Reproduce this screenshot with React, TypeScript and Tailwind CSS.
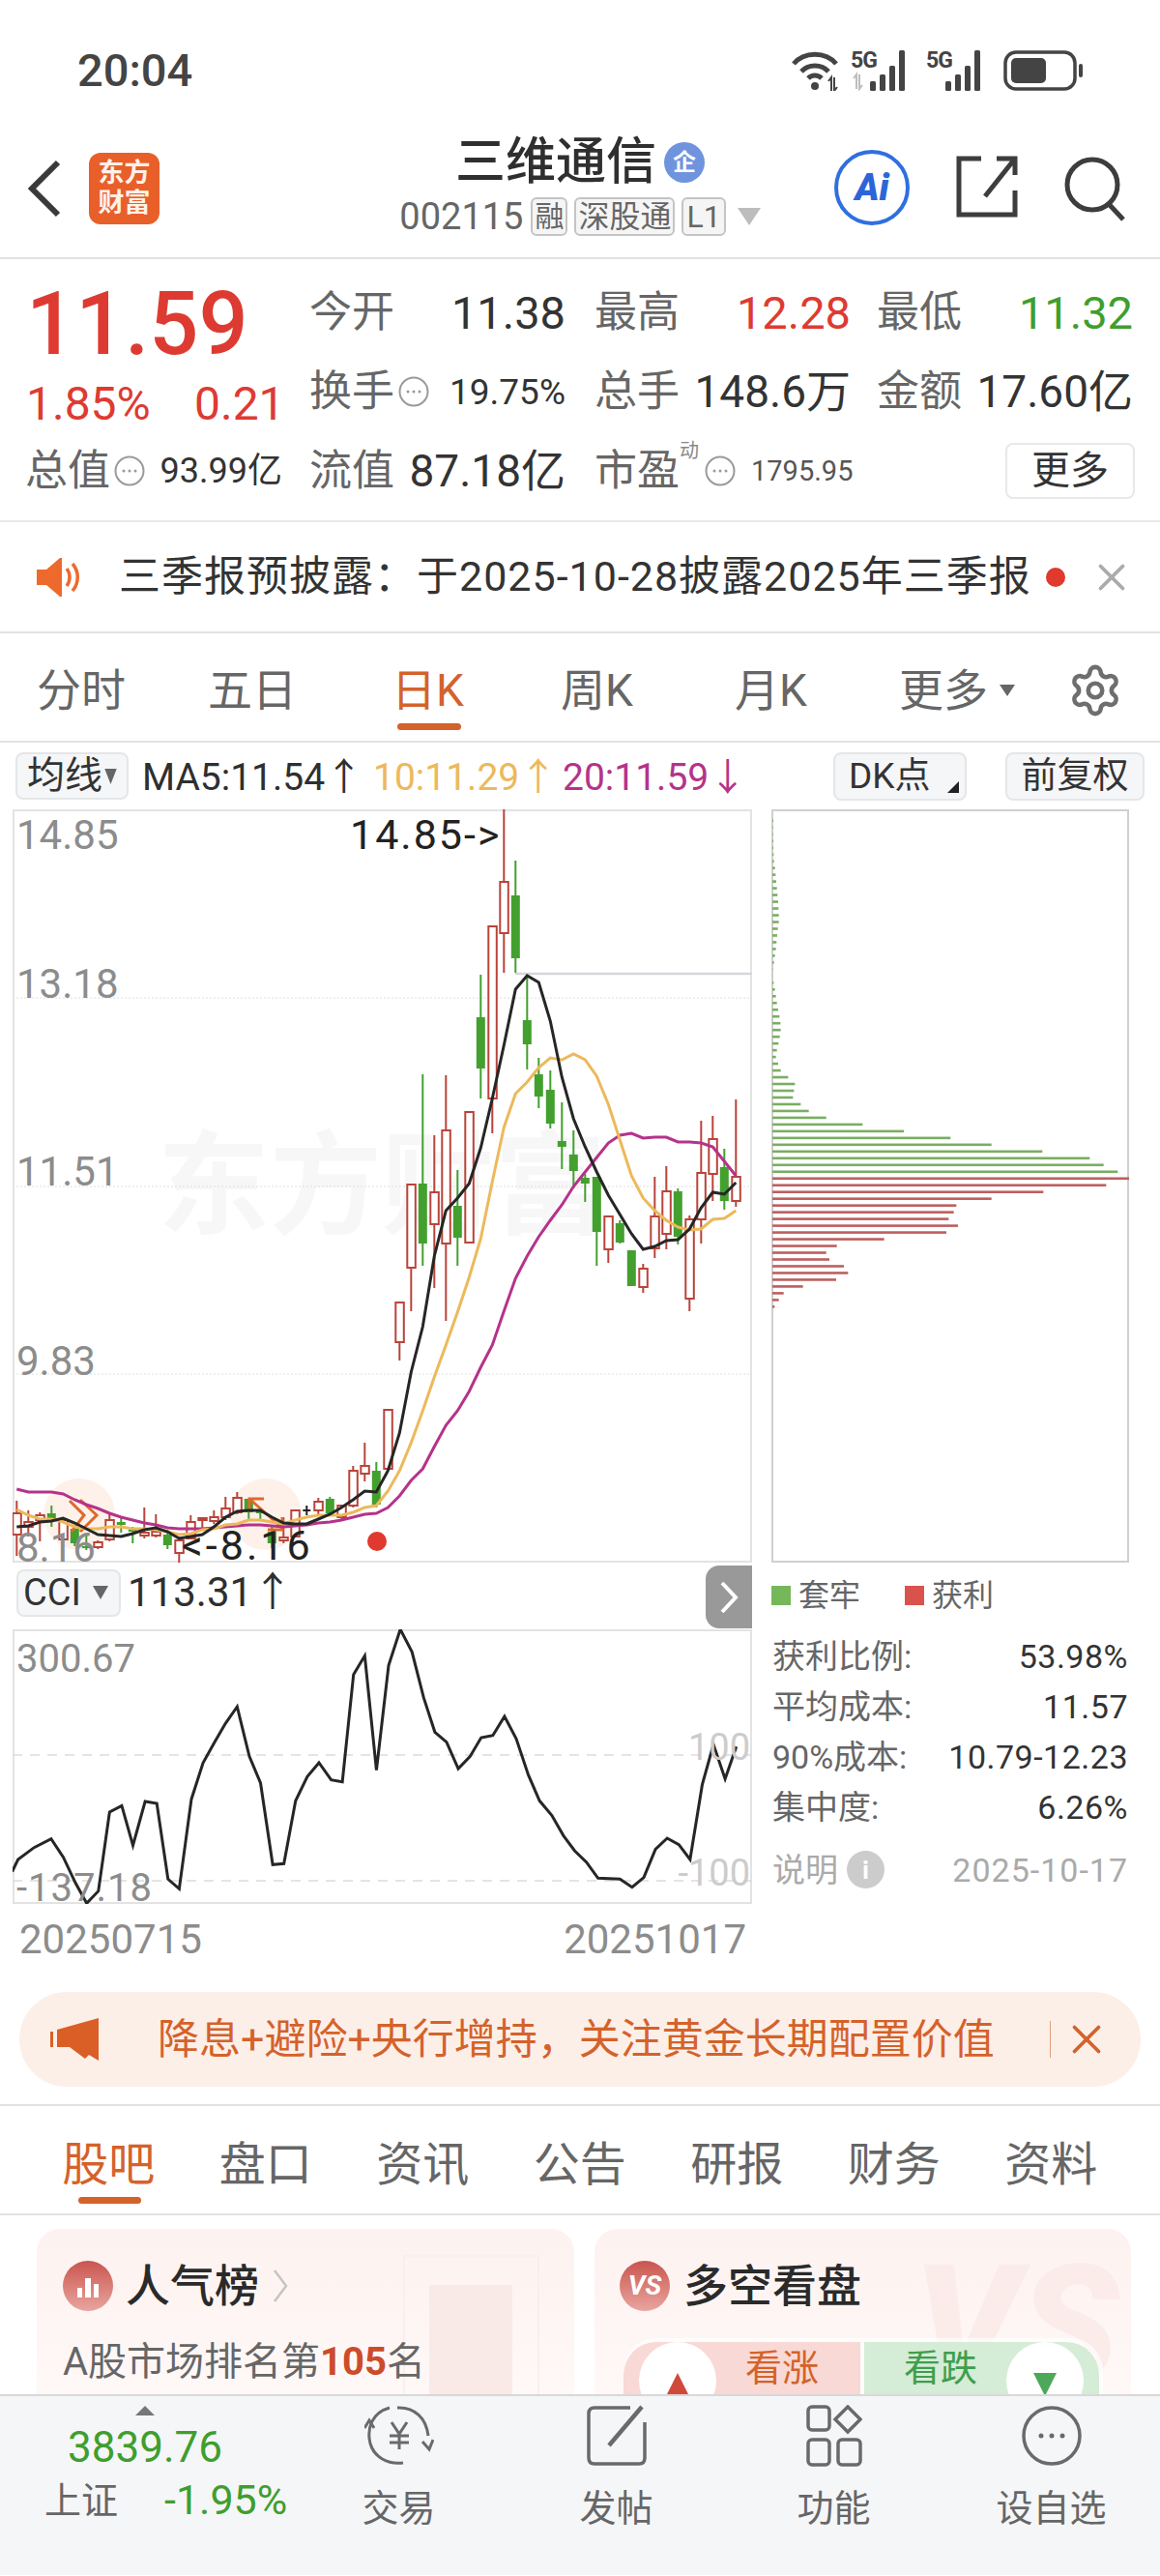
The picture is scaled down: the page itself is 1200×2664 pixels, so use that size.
import { Settings, X } from "lucide-react";

// [bodyTop, bodyBottom, high, low, "r" | "g"]
type Candle = [number, number, number, number, string];

const candles: Candle[] = [
  [1566, 1588, 1553, 1610, "r"],
  [1575, 1580, 1563, 1590, "r"],
  [1568, 1573, 1565, 1595, "r"],
  [1566, 1572, 1558, 1580, "g"],
  [1573, 1593, 1570, 1595, "r"],
  [1582, 1597, 1580, 1600, "g"],
  [1600, 1602, 1587, 1604, "g"],
  [1596, 1601, 1594, 1603, "r"],
  [1573, 1593, 1565, 1595, "r"],
  [1575, 1578, 1570, 1586, "g"],
  [1583, 1585, 1580, 1597, "g"],
  [1586, 1589, 1560, 1592, "r"],
  [1585, 1589, 1567, 1591, "r"],
  [1588, 1599, 1583, 1603, "g"],
  [1594, 1607, 1590, 1617, "r"],
  [1575, 1592, 1568, 1593, "r"],
  [1571, 1573, 1570, 1583, "r"],
  [1570, 1574, 1563, 1577, "r"],
  [1561, 1570, 1549, 1573, "r"],
  [1550, 1565, 1544, 1567, "r"],
  [1551, 1565, 1551, 1573, "g"],
  [1563, 1566, 1560, 1572, "g"],
  [1585, 1597, 1579, 1602, "g"],
  [1591, 1594, 1570, 1597, "r"],
  [1563, 1590, 1563, 1590, "r"],
  [1563, 1564, 1558, 1568, "k"],
  [1554, 1563, 1550, 1567, "r"],
  [1551, 1566, 1549, 1568, "g"],
  [1558, 1570, 1557, 1572, "r"],
  [1522, 1558, 1517, 1560, "r"],
  [1517, 1525, 1493, 1533, "r"],
  [1522, 1557, 1513, 1560, "g"],
  [1459, 1520, 1459, 1520, "r"],
  [1348, 1389, 1348, 1408, "r"],
  [1226, 1312, 1226, 1357, "r"],
  [1225, 1287, 1112, 1310, "g"],
  [1234, 1267, 1175, 1333, "r"],
  [1170, 1287, 1113, 1367, "r"],
  [1248, 1281, 1211, 1310, "g"],
  [1151, 1286, 1151, 1286, "r"],
  [1053, 1106, 1009, 1137, "g"],
  [959, 1137, 959, 1173, "r"],
  [913, 966, 838, 1007, "r"],
  [927, 992, 891, 1007, "g"],
  [1056, 1081, 1010, 1107, "g"],
  [1112, 1135, 1095, 1147, "g"],
  [1128, 1163, 1108, 1168, "g"],
  [1181, 1187, 1141, 1210, "g"],
  [1195, 1212, 1170, 1230, "g"],
  [1219, 1225, 1215, 1244, "g"],
  [1218, 1275, 1218, 1310, "g"],
  [1259, 1293, 1259, 1307, "r"],
  [1266, 1286, 1263, 1287, "g"],
  [1294, 1331, 1294, 1331, "g"],
  [1313, 1332, 1308, 1338, "r"],
  [1259, 1292, 1218, 1302, "r"],
  [1233, 1277, 1207, 1293, "r"],
  [1233, 1280, 1230, 1288, "g"],
  [1262, 1344, 1258, 1357, "r"],
  [1214, 1262, 1160, 1287, "r"],
  [1179, 1215, 1155, 1243, "r"],
  [1208, 1243, 1189, 1252, "g"],
  [1218, 1243, 1138, 1249, "r"],
];

const ma5 = [
  1580, 1579, 1575, 1574, 1571, 1576, 1582, 1588, 1589, 1590, 1587, 1583, 1581, 1585, 1592, 1590, 1588, 1580, 1570, 1564,
  1563, 1563, 1570, 1576, 1577, 1577, 1572, 1567, 1560, 1552, 1543, 1544, 1522, 1483, 1420, 1373, 1300, 1253, 1240, 1225,
  1188, 1137, 1082, 1024, 1010, 1017, 1057, 1115, 1158, 1187, 1213, 1237, 1257, 1277, 1293, 1290, 1284, 1283, 1272, 1250,
  1234, 1236, 1224,
];

const ma10 = [
  1562, 1568, 1572, 1572, 1575, 1580, 1582, 1582, 1580, 1580, 1582, 1582, 1583, 1585, 1588, 1587, 1583, 1582, 1578, 1577,
  1573, 1573, 1575, 1577, 1573, 1570, 1568, 1568, 1568, 1565, 1560, 1558, 1543, 1522, 1493, 1460, 1425, 1392, 1358, 1322,
  1282, 1223, 1167, 1132, 1120, 1105, 1095, 1097, 1091, 1097, 1114, 1143, 1180, 1217, 1240, 1253, 1263, 1270, 1273, 1272,
  1262, 1261, 1253,
];

const ma20 = [
  1541, 1544, 1544, 1544, 1546, 1552, 1557, 1561, 1566, 1570, 1573, 1576, 1578, 1581, 1582, 1582, 1582, 1581, 1580, 1579,
  1578, 1578, 1579, 1580, 1579, 1578, 1576, 1575, 1573, 1570, 1567, 1566, 1560, 1548, 1532, 1520, 1497, 1475, 1460, 1440,
  1415, 1392, 1357, 1323, 1300, 1280, 1263, 1247, 1228, 1213, 1198, 1183, 1175, 1173, 1178, 1177, 1177, 1182, 1182, 1183,
  1187, 1202, 1217,
];

const cci = [
  [25, 950], [37, 912], [70, 875], [105, 848], [130, 905], [155, 985], [178, 1048], [202, 1010], [225, 765], [250, 745],
  [273, 868], [298, 732], [322, 738], [345, 973], [368, 1003], [393, 725], [417, 612], [440, 550], [463, 490], [487, 438],
  [512, 592], [535, 675], [560, 928], [583, 925], [607, 730], [631, 655], [655, 612], [680, 665], [703, 671], [726, 338],
  [749, 280], [773, 635], [798, 310], [822, 198], [846, 268], [870, 410], [893, 517], [917, 548], [941, 630], [965, 593],
  [988, 534], [1012, 527], [1036, 468], [1060, 537], [1085, 650], [1108, 730], [1133, 775], [1157, 838], [1180, 885],
  [1204, 920], [1228, 970], [1250, 971], [1273, 973], [1298, 998], [1322, 968], [1346, 880], [1370, 846], [1394, 866],
  [1417, 912], [1442, 680], [1465, 555], [1489, 662], [1512, 562],
];

const chipGreen = [
  3, 2, 2, 3, 3, 4, 5, 8, 10, 12, 14, 16, 18, 19, 20, 20, 17, 15, 13, 11, 8, 5, 1, 0, 4, 8, 11, 14, 18, 22, 25, 26, 23, 19,
  14, 11, 18, 26, 49, 70, 67, 64, 88, 113, 167, 280, 408, 553, 680, 838, 985, 1028, 1072,
];
const chipRed = [1107, 1036, 841, 680, 571, 563, 547, 576, 540, 347, 200, 167, 177, 222, 235, 198, 95, 35, 20, 7];

const candleX = (i: number) => 17.3 + 12 * i;
const linePoints = (ys: number[]) => ys.map((y, i) => `${candleX(i)},${y}`).join(" ");

function KChart() {
  return (
    <svg viewBox="13 838 765 779" className="absolute left-[-2px] top-[-2px] h-[779px] w-[765px]">
      <line x1="13" x2="778" y1="1033" y2="1033" stroke="#dedede" strokeDasharray="2 2" />
      <line x1="13" x2="778" y1="1228" y2="1228" stroke="#dedede" strokeDasharray="2 2" />
      <line x1="13" x2="778" y1="1422" y2="1422" stroke="#dedede" strokeDasharray="2 2" />
      <line x1="533" x2="778" y1="1008" y2="1008" stroke="#d5d5dc" strokeWidth="2.5" />
      <circle cx="82" cy="1567" r="37" fill="#fdf1ea" />
      <circle cx="275" cy="1567" r="37" fill="#fdf1ea" />
      {candles.map(([top, bottom, high, low, c], i) => {
        const x = candleX(i);
        const color = c === "r" ? "#b9443b" : c === "g" ? "#43a02f" : "#222222";
        return (
          <g key={i}>
            <line x1={x} x2={x} y1={high} y2={low} stroke={color} strokeWidth="2" />
            {c === "g" ? (
              <rect x={x - 4.5} y={top} width="9" height={bottom - top} fill={color} />
            ) : c === "r" ? (
              <rect x={x - 4} y={top} width="8.5" height={bottom - top} fill="#ffffff" stroke={color} strokeWidth="2" />
            ) : (
              <line x1={x - 4} x2={x + 4} y1={top} y2={top} stroke={color} strokeWidth="2" />
            )}
          </g>
        );
      })}
      <g fill="none" stroke="#dd6a2c" strokeWidth="3">
        <path d="M72 1553 L87 1568 L74 1585 M83 1552 L100 1568 L83 1585" />
        <path d="M273 1551 L258 1551 L258 1565 M258 1551 L293 1582 M292 1570 L292 1583 L277 1583" />
      </g>
      <polyline points={linePoints(ma20)} fill="none" stroke="#b5338a" strokeWidth="3" />
      <polyline points={linePoints(ma10)} fill="none" stroke="#ecb95b" strokeWidth="3" />
      <polyline points={linePoints(ma5)} fill="none" stroke="#262626" strokeWidth="3" />
      <circle cx="390" cy="1595" r="10" fill="#e0392d" />
    </svg>
  );
}

function ChipChart() {
  return (
    <svg viewBox="798 838 370 779" className="absolute left-[-2px] top-[-2px] h-[779px] w-[370px]">
      {chipGreen.map((w, i) => (
        <rect key={i} x="799" y={849.8 + 6.98 * i - 1.3} width={w / 3} height="2.6" fill="#7aae62" />
      ))}
      {chipRed.map((w, i) => (
        <rect key={i} x="799" y={849.8 + 6.98 * (i + 53) - 1.3} width={w / 3} height="2.6" fill="#bd5f5f" />
      ))}
    </svg>
  );
}

function CciChart() {
  const pts = cci.map(([x, y]) => `${x / 1.985},${1620 + y / 3}`).join(" ");
  return (
    <svg viewBox="13 1686 765 284" className="absolute left-[-2px] top-[-2px] h-[284px] w-[765px]">
      <line x1="13" x2="778" y1="1816" y2="1816" stroke="#dcdcdc" strokeWidth="1.5" strokeDasharray="10 8" />
      <line x1="13" x2="778" y1="1946" y2="1946" stroke="#dcdcdc" strokeWidth="1.5" strokeDasharray="10 8" />
      <polyline points={pts} fill="none" stroke="#262626" strokeWidth="3" />
    </svg>
  );
}

function Dots({ className }: { className: string }) {
  return (
    <svg viewBox="0 0 32 32" className={className}>
      <circle cx="16" cy="16" r="14.5" fill="none" stroke="#9a9a9a" strokeWidth="2" />
      <circle cx="10" cy="16" r="1.5" fill="#9a9a9a" />
      <circle cx="16" cy="16" r="1.5" fill="#9a9a9a" />
      <circle cx="22" cy="16" r="1.5" fill="#9a9a9a" />
    </svg>
  );
}

function Signal({ arrows }: { arrows?: boolean }) {
  return (
    <div className="relative h-[42px] w-[66px]">
      <span className="absolute left-0 top-[-2px] text-[23px] font-bold leading-[26px] tracking-[-1px] text-[#444444]">5G</span>
      <svg viewBox="0 0 66 42" className="absolute inset-0 h-full w-full">
        {arrows && <path d="M3 29 L6 25 L6 40 M12 36 L9 40 L9 25" fill="none" stroke="#bdbdbd" strokeWidth="2" />}
        <rect x="20" y="32" width="6" height="10" rx="1.5" fill="#444444" />
        <rect x="30" y="25" width="6" height="17" rx="1.5" fill="#444444" />
        <rect x="40" y="16" width="6" height="26" rx="1.5" fill="#444444" />
        <rect x="50" y="0" width="6" height="42" rx="1.5" fill="#444444" />
      </svg>
    </div>
  );
}

function StatusBar() {
  return (
    <div className="flex h-[130px] items-start justify-between pl-[80px] pr-[78px] pt-[52px]">
      <span className="text-[47px] font-medium leading-[42px] text-[#444444]">20:04</span>
      <div className="flex items-start">
        <svg viewBox="0 0 56 42" className="mr-[6px] h-[42px] w-[56px]">
          <g fill="none" stroke="#444444" strokeWidth="5">
            <path d="M3 14 C14 1 36 1 47 14" />
            <path d="M11 22 C18 14 32 14 39 22" />
            <path d="M18 29 C22 25 28 25 32 29" />
          </g>
          <circle cx="25" cy="37" r="4" fill="#444444" />
          <path d="M39 32 L42 28 L42 42 M48 38 L45 42 L45 28" fill="none" stroke="#444444" strokeWidth="2" />
        </svg>
        <Signal arrows />
        <div className="ml-[12px]">
          <Signal />
        </div>
        <svg viewBox="0 0 84 42" className="ml-[14px] h-[42px] w-[84px]">
          <rect x="2" y="2" width="72" height="38" rx="11" fill="none" stroke="#444444" strokeWidth="3.5" />
          <rect x="8" y="8" width="36" height="26" rx="5" fill="#444444" />
          <rect x="78" y="14" width="4" height="14" rx="2" fill="#444444" />
        </svg>
      </div>
    </div>
  );
}

function Header() {
  return (
    <div className="flex h-[138px] border-b-2 border-[#e2e2e2]">
      <div className="flex w-[350px] items-start pl-[28px] pt-[28px]">
        <svg viewBox="0 0 36 60" className="mt-[7px] h-[60px] w-[36px]">
          <path d="M32 3 L5 30 L32 57" fill="none" stroke="#3a3a3a" strokeWidth="6" />
        </svg>
        <div className="ml-[28px] flex h-[74px] w-[73px] flex-col items-center justify-center rounded-[12px] bg-[#e85f2a] text-[27px] font-bold leading-[31px] text-[#fff2e8]">
          <span>东方</span>
          <span>财富</span>
        </div>
      </div>
      <div className="flex w-[500px] flex-col items-center">
        <div className="mt-[12px] flex items-center">
          <span className="text-[52px] font-medium leading-[52px] text-[#2f2f2f]">三维通信</span>
          <span className="ml-[8px] flex h-[42px] w-[42px] items-center justify-center rounded-full bg-[#6f94dd] text-[24px] font-bold leading-none text-white">企</span>
        </div>
        <div className="mt-[8px] flex items-center">
          <span className="text-[38px] leading-[44px] text-[#666666]">002115</span>
          <span className="ml-[8px] flex h-[40px] items-center rounded-[6px] border-2 border-[#c4c4c4] bg-[#f5f5f5] px-[2px] text-[30px] leading-none text-[#666666]">融</span>
          <span className="ml-[7px] flex h-[40px] items-center rounded-[6px] border-2 border-[#c4c4c4] bg-[#f5f5f5] px-[2px] text-[32px] leading-none text-[#666666]">深股通</span>
          <span className="ml-[7px] flex h-[40px] items-center rounded-[6px] border-2 border-[#c4c4c4] bg-[#f5f5f5] px-[3px] text-[32px] leading-none text-[#666666]">L1</span>
          <svg viewBox="0 0 24 18" className="ml-[12px] h-[18px] w-[24px]">
            <path d="M0 0 L24 0 L12 18 Z" fill="#bdbdbd" />
          </svg>
        </div>
      </div>
      <div className="flex flex-1 items-start pl-[13px] pt-[25px]">
        <div className="flex h-[78px] w-[78px] items-center justify-center rounded-full border-[4px] border-[#2f6fe0] text-[38px] font-black italic leading-none text-[#2b66d9]">
          Ai
        </div>
        <svg viewBox="0 0 64 64" className="ml-[48px] mt-[6px] h-[64px] w-[64px]">
          <path d="M26 3 L3 3 L3 61 L61 61 L61 36 M61 3 L30 42 M42 3 L61 3 L61 20" fill="none" stroke="#3d3d3d" strokeWidth="5" />
        </svg>
        <svg viewBox="0 0 66 68" className="ml-[47px] mt-[6px] h-[68px] w-[66px]">
          <circle cx="30" cy="30" r="26" fill="none" stroke="#3d3d3d" strokeWidth="5" />
          <path d="M47 50 L62 66" fill="none" stroke="#3d3d3d" strokeWidth="5" />
        </svg>
      </div>
    </div>
  );
}

function Cell({ label, value, dots, valueClass }: { label: string; value: string; dots?: boolean; valueClass: string }) {
  return (
    <div className="flex h-[82px] w-[265px] items-center justify-between">
      <div className="flex items-center">
        <span className="text-[44px] leading-none text-[#666666]">{label}</span>
        {dots && <Dots className="ml-[4px] h-[32px] w-[32px]" />}
      </div>
      <span className={valueClass}>{value}</span>
    </div>
  );
}

function Quote() {
  const big = "text-[46px] leading-none text-[#333333] whitespace-nowrap";
  return (
    <div className="h-[272px] border-b-2 border-[#e8e8e8] pt-[14px]">
      <div className="flex">
        <div className="w-[320px] pl-[27px]">
          <div className="flex h-[108px] items-center text-[90px] font-medium leading-none text-[#dd3b32]">11.59</div>
          <div className="flex h-[56px] items-center text-[48px] leading-none text-[#dd3b32]">
            <span className="w-[174px]">1.85%</span>
            <span>0.21</span>
          </div>
        </div>
        <div className="flex flex-col">
          <div className="flex">
            <Cell label="今开" value="11.38" valueClass="text-[47px] leading-none text-[#333333]" />
            <div className="ml-[30px]">
              <Cell label="最高" value="12.28" valueClass="text-[47px] leading-none text-[#dd3b32]" />
            </div>
            <div className="ml-[27px]">
              <Cell label="最低" value="11.32" valueClass="text-[47px] leading-none text-[#3f9e2e]" />
            </div>
          </div>
          <div className="flex">
            <Cell label="换手" dots value="19.75%" valueClass="text-[37px] leading-none text-[#333333]" />
            <div className="ml-[30px]">
              <Cell label="总手" value="148.6万" valueClass={big} />
            </div>
            <div className="ml-[27px]">
              <Cell label="金额" value="17.60亿" valueClass={big} />
            </div>
          </div>
        </div>
      </div>
      <div className="flex items-center">
        <div className="flex h-[82px] w-[292px] items-center justify-between pl-[26px]">
          <div className="flex items-center">
            <span className="text-[44px] leading-none text-[#666666]">总值</span>
            <Dots className="ml-[4px] h-[32px] w-[32px]" />
          </div>
          <span className="text-[36px] leading-none text-[#333333]">93.99亿</span>
        </div>
        <div className="ml-[28px]">
          <Cell label="流值" value="87.18亿" valueClass={big} />
        </div>
        <div className="relative ml-[30px] flex h-[82px] w-[265px] items-center">
          <span className="shrink-0 whitespace-nowrap text-[44px] leading-none text-[#666666]">市盈</span>
          <span className="absolute left-[88px] top-[10px] text-[20px] leading-none text-[#888888]">动</span>
          <Dots className="ml-[26px] h-[32px] w-[32px] shrink-0" />
          <span className="ml-[16px] text-[29px] leading-none text-[#555555]">1795.95</span>
        </div>
        <div className="ml-[160px] flex h-[58px] w-[134px] items-center justify-center rounded-[8px] border-2 border-[#e8e8e8] bg-white text-[40px] leading-none text-[#333333]">
          更多
        </div>
      </div>
    </div>
  );
}

function Notice() {
  return (
    <div className="flex h-[115px] items-center border-b-2 border-[#e2e2e2] pl-[36px]">
      <svg viewBox="0 0 50 42" className="h-[42px] w-[50px]">
        <path d="M2 13 L12 13 L26 1 L28 1 L28 41 L26 41 L12 29 L2 29 Z" fill="#ee6a2c" />
        <path d="M33 12 C37 17 37 25 33 30 M39 7 C46 15 46 27 39 35" fill="none" stroke="#ee6a2c" strokeWidth="3.5" />
      </svg>
      <span className="ml-[37px] whitespace-nowrap text-[43px] leading-none tracking-[1px] text-[#333333]">{"三季报预披露\uFF1A于2025-10-28披露2025年三季报"}</span>
      <span className="ml-[15px] h-[20px] w-[20px] rounded-full bg-[#e0392d]" />
      <X className="ml-[25px] h-[46px] w-[46px] text-[#ababab]" strokeWidth={2} />
    </div>
  );
}

function PeriodTabs() {
  return (
    <div className="flex h-[113px] items-center border-b-2 border-[#e2e2e2] pl-[38px] pt-[6px] text-[46px] leading-none text-[#666666]">
      <span className="w-[177px]">分时</span>
      <span className="w-[190px]">五日</span>
      <span className="relative w-[175px] text-[#d4622a]">
        日K
        <span className="absolute left-[6px] top-[57px] h-[7px] w-[66px] rounded-full bg-[#d4622a]" />
      </span>
      <span className="w-[180px]">周K</span>
      <span className="w-[170px]">月K</span>
      <span>更多</span>
      <svg viewBox="0 0 16 12" className="ml-[12px] h-[12px] w-[16px]">
        <path d="M0 0 L16 0 L8 12 Z" fill="#666666" />
      </svg>
      <Settings className="ml-[54px] h-[58px] w-[58px] text-[#6e6e6e]" strokeWidth={1.9} />
    </div>
  );
}

function MaRow() {
  return (
    <div className="flex h-[69px] items-center py-[10px] pl-[16px] text-[39px] leading-none">
      <div className="flex h-[49px] w-[117px] items-center rounded-[8px] border-2 border-[#e5e6e8] bg-[#f5f6f8] pl-[10px] text-[#333333]">
        均线
        <svg viewBox="0 0 14 18" className="ml-[2px] h-[16px] w-[13px]">
          <path d="M0 0 L14 0 L7 18 Z" fill="#666666" />
        </svg>
      </div>
      <span className="ml-[14px] w-[239px] whitespace-nowrap pt-[3px] text-[#2f2f2f]">MA5:11.54↑</span>
      <span className="w-[196px] whitespace-nowrap pt-[3px] text-[#ecb95b]">10:11.29↑</span>
      <span className="w-[280px] whitespace-nowrap pt-[3px] text-[#b5338a]">20:11.59↓</span>
      <div className="relative flex h-[50px] w-[138px] items-center rounded-[8px] border-2 border-[#e5e6e8] bg-[#f5f6f8] pl-[14px] text-[37px] text-[#333333]">
        DK点
        <svg viewBox="0 0 12 12" className="absolute bottom-[6px] right-[6px] h-[12px] w-[12px]">
          <path d="M12 0 L12 12 L0 12 Z" fill="#222222" />
        </svg>
      </div>
      <div className="ml-[40px] flex h-[50px] w-[144px] items-center justify-center rounded-[8px] border-2 border-[#e5e6e8] bg-[#f5f6f8] text-[37px] text-[#333333]">
        前复权
      </div>
    </div>
  );
}

function Charts() {
  const axis = "absolute text-[42px] leading-none text-[#8c8c8c]";
  const small = "absolute text-[40px] leading-none text-[#8c8c8c]";
  return (
    <div className="flex h-[1223px] pl-[13px]">
      <div className="w-[765px]">
        <div className="relative h-[779px] border-2 border-[#e3e3e3]">
          <span className="absolute left-[148px] top-[330px] whitespace-nowrap text-[116px] font-bold leading-none text-[#f7f7f7]">东方财富</span>
          <KChart />
          <span className={`${axis} left-[2px] top-[4px]`}>14.85</span>
          <span className={`${axis} left-[2px] top-[158px]`}>13.18</span>
          <span className={`${axis} left-[2px] top-[352px]`}>11.51</span>
          <span className={`${axis} left-[2px] top-[548px]`}>9.83</span>
          <span className={`${axis} left-[2px] top-[741px]`}>8.16</span>
          <span className="absolute left-[347px] top-[3px] text-[43px] leading-none tracking-[2px] text-[#222222]">14.85-&gt;</span>
          <span className="absolute left-[173px] top-[738px] text-[43px] leading-none tracking-[3px] text-[#222222]">&lt;-8.16</span>
        </div>
        <div className="relative flex h-[69px] items-center pb-[7px] pl-[4px]">
          <div className="flex h-[49px] w-[108px] items-center rounded-[8px] border-2 border-[#e5e6e8] bg-[#f5f6f8] pl-[5px] text-[38px] leading-none text-[#333333]">
            CCI
            <svg viewBox="0 0 16 14" className="ml-[12px] h-[14px] w-[16px]">
              <path d="M0 0 L16 0 L8 14 Z" fill="#666666" />
            </svg>
          </div>
          <span className="ml-[7px] text-[42px] leading-none text-[#2f2f2f]">113.31↑</span>
          <div className="absolute right-0 top-[3px] flex h-[65px] w-[48px] items-center justify-center rounded-l-[14px] bg-[#999999]">
            <svg viewBox="0 0 20 34" className="h-[34px] w-[20px]">
              <path d="M3 2 L17 17 L3 32" fill="none" stroke="#ffffff" strokeWidth="4" />
            </svg>
          </div>
        </div>
        <div className="relative h-[284px] border-2 border-[#e3e3e3]">
          <CciChart />
          <span className={`${small} left-[2px] top-[9px]`}>300.67</span>
          <span className={`${small} left-[2px] top-[246px] tracking-[1px]`}>-137.18</span>
          <span className="absolute right-[0px] top-[101px] text-[38px] leading-none text-[#cccccc]">100</span>
          <span className="absolute right-[0px] top-[231px] text-[38px] leading-none text-[#cccccc]">-100</span>
        </div>
        <div className="flex justify-between pl-[7px] pr-[6px] pt-[16px] text-[42px] leading-[42px] text-[#8c8c8c]">
          <span>20250715</span>
          <span>20251017</span>
        </div>
      </div>
      <div className="ml-[20px] w-[370px]">
        <div className="relative h-[779px] border-2 border-[#cfcfcf]">
          <ChipChart />
        </div>
        <div className="flex h-[62px] items-center pt-[6px] text-[32px] leading-none text-[#666666]">
          <span className="h-[20px] w-[20px] bg-[#74b85a]" />
          <span className="ml-[8px] w-[110px]">套牢</span>
          <span className="h-[20px] w-[20px] bg-[#d9534c]" />
          <span className="ml-[8px]">获利</span>
        </div>
        <div className="flex flex-col pl-[1px] pr-[1px] pt-[9px] text-[34px] leading-none">
          {[
            ["获利比例:", "53.98%"],
            ["平均成本:", "11.57"],
            ["90%成本:", "10.79-12.23"],
            ["集中度:", "6.26%"],
          ].map(([label, value]) => (
            <div key={label} className="flex h-[52px] items-center justify-between">
              <span className="text-[#666666]">{label}</span>
              <span className="tracking-[0.5px] text-[#333333]">{value}</span>
            </div>
          ))}
        </div>
        <div className="mt-[19px] flex items-center justify-between pl-[1px] pr-[1px] text-[34px] leading-none text-[#aaaaaa]">
          <div className="flex items-center">
            <span>说明</span>
            <span className="ml-[9px] flex h-[39px] w-[39px] items-center justify-center rounded-full bg-[#cccccc] text-[26px] font-bold text-white">i</span>
          </div>
          <span className="tracking-[1px]">2025-10-17</span>
        </div>
      </div>
    </div>
  );
}

function Banner() {
  return (
    <div className="h-[118px] border-b-2 border-[#e2e2e2] px-[20px]">
      <div className="flex h-[98px] items-center rounded-full bg-[#fcefe8] pl-[32px]">
        <svg viewBox="0 0 50 44" className="h-[44px] w-[50px]">
          <path d="M0 14 L3 14 L3 30 L0 30 Z M7 12 L50 0 L50 44 L40 38 L36 42 L20 30 L7 30 Z" fill="#d95f27" />
        </svg>
        <span className="ml-[61px] whitespace-nowrap text-[43px] leading-none text-[#d4622a]">{"降息+避险+央行增持\uFF0C关注黄金长期配置价值"}</span>
        <span className="ml-[57px] h-[38px] w-px bg-[#e0a07f]" />
        <X className="ml-[12px] h-[50px] w-[50px] text-[#d4622a]" strokeWidth={1.8} />
      </div>
    </div>
  );
}

function InfoTabs() {
  return (
    <div className="flex h-[113px] items-center border-b-2 border-[#e2e2e2] pt-[10px] pl-[31px] text-[48px] leading-none text-[#666666]">
      <span className="relative w-[162.5px] text-center text-[#d4622a]">
        股吧
        <span className="absolute left-[50px] top-[57px] h-[7px] w-[65px] rounded-full bg-[#d4622a]" />
      </span>
      {["盘口", "资讯", "公告", "研报", "财务", "资料"].map((t) => (
        <span key={t} className="w-[162.5px] text-center">
          {t}
        </span>
      ))}
    </div>
  );
}

function Cards() {
  return (
    <div className="mt-[14px] flex h-[171px] gap-[21px] overflow-hidden pl-[38px]">
      <div className="relative h-[220px] w-[556px] overflow-hidden rounded-[24px] bg-gradient-to-b from-[#fdf2f0] to-[#fffaf9] pl-[27px]">
        <div className="absolute bottom-0 left-[379px] top-[27px] w-[141px] border-x-2 border-t-2 border-[#fbeeec]" />
        <div className="absolute bottom-0 left-[406px] top-[58px] w-[86px] bg-[#f9e9e7]" />
        <div className="relative mt-[33px] flex items-center">
          <div className="flex h-[52px] w-[52px] items-end justify-center gap-[3px] rounded-full bg-gradient-to-b from-[#c9544f] to-[#e8a5a0] pb-[14px]">
            <span className="h-[10px] w-[5px] bg-white" />
            <span className="h-[20px] w-[6px] bg-white" />
            <span className="h-[14px] w-[5px] bg-white" />
          </div>
          <span className="ml-[13px] text-[46px] font-medium leading-none text-[#2a2a2a]">人气榜</span>
          <svg viewBox="0 0 16 36" className="ml-[14px] h-[36px] w-[16px]">
            <path d="M2 2 L14 18 L2 34" fill="none" stroke="#c4c4c4" strokeWidth="2.5" />
          </svg>
        </div>
        <div className="relative mt-[33px] text-[40px] leading-none text-[#666666]">
          A股市场排名第<span className="font-bold text-[#cc4b2a]">105</span>名
        </div>
      </div>
      <div className="relative h-[220px] w-[555px] overflow-hidden rounded-[24px] bg-gradient-to-b from-[#fdf2f0] to-[#fffaf9] pl-[26px]">
        <span className="absolute left-[330px] top-[15px] text-[170px] font-black italic leading-none text-[#fbecea]">VS</span>
        <div className="relative mt-[33px] flex items-center">
          <div className="flex h-[52px] w-[52px] items-center justify-center rounded-full bg-gradient-to-b from-[#c9544f] to-[#e8a5a0] text-[28px] font-bold italic leading-none text-white">
            VS
          </div>
          <span className="ml-[14px] text-[46px] font-medium leading-none text-[#2a2a2a]">多空看盘</span>
        </div>
        <div className="relative ml-[4px] mt-[28px] flex h-[70px] w-[496px] gap-[4px] rounded-t-[34px] bg-white/70 pt-[4px]">
          <div className="flex h-full w-[245px] rounded-tl-[34px] bg-[#f8d9d5] pl-[16px]">
            <div className="flex h-[80px] w-[80px] items-start justify-center rounded-full bg-white pt-[32px]">
              <svg viewBox="0 0 24 24" className="h-[24px] w-[24px]">
                <path d="M12 0 L24 24 L0 24 Z" fill="#cf4a3a" />
              </svg>
            </div>
            <span className="ml-[30px] mt-[8px] text-[38px] leading-none text-[#d4622a]">看涨</span>
          </div>
          <div className="flex h-full w-[243px] justify-end rounded-tr-[34px] bg-[#d5ecd6] pr-[16px]">
            <span className="mr-[30px] mt-[8px] text-[38px] leading-none text-[#3f9e4e]">看跌</span>
            <div className="flex h-[80px] w-[80px] items-start justify-center rounded-full bg-white pt-[32px]">
              <svg viewBox="0 0 24 24" className="h-[24px] w-[24px]">
                <path d="M0 0 L24 0 L12 24 Z" fill="#4da85a" />
              </svg>
            </div>
          </div>
        </div>
      </div>
    </div>
  );
}

function BottomBar() {
  const label = "mt-[24px] text-[38px] leading-none text-[#666666]";
  return (
    <div className="flex h-[187px] border-t-2 border-[#d8d8d8] bg-[#f5f6f8]">
      <div className="relative w-[300px]">
        <svg viewBox="0 0 20 10" className="absolute left-[140px] top-[10px] h-[10px] w-[20px]">
          <path d="M10 0 L20 10 L0 10 Z" fill="#777777" />
        </svg>
        <div className="pl-[70px] pt-[31px] text-[44px] leading-none text-[#3f9e2e]">3839.76</div>
        <div className="flex items-center pl-[46px] pt-[11px]">
          <span className="w-[124px] text-[38px] leading-none text-[#666666]">上证</span>
          <span className="text-[43px] leading-none text-[#3f9e2e]">-1.95%</span>
        </div>
      </div>
      <div className="flex w-[225px] flex-col items-center pt-[9px]">
        <svg viewBox="0 0 72 64" className="h-[64px] w-[72px]">
          <g fill="none" stroke="#6a6a6a" strokeWidth="3">
            <path d="M26 3 C8 8 2 24 6 40 C10 54 24 62 40 60" />
            <path d="M34 3 C52 2 64 14 66 32" />
            <path d="M0 24 L5 16 L10 24 M60 38 L67 46 L71 36" />
            <path d="M28 18 L36 30 L44 18 M36 30 L36 46 M26 32 L46 32 M26 39 L46 39" />
          </g>
        </svg>
        <span className={label}>交易</span>
      </div>
      <div className="flex w-[225px] flex-col items-center pt-[9px]">
        <svg viewBox="0 0 64 64" className="h-[64px] w-[64px]">
          <path d="M46 3 L9 3 Q3 3 3 9 L3 55 Q3 61 9 61 L55 61 Q61 61 61 55 L61 18" fill="none" stroke="#6a6a6a" strokeWidth="3.5" />
          <path d="M24 42 L58 2" fill="none" stroke="#6a6a6a" strokeWidth="4.5" />
        </svg>
        <span className={label}>发帖</span>
      </div>
      <div className="flex w-[225px] flex-col items-center pt-[9px]">
        <svg viewBox="0 0 58 64" className="h-[64px] w-[58px]">
          <g fill="none" stroke="#6a6a6a" strokeWidth="3.5">
            <rect x="2" y="2" width="22" height="24" rx="4" />
            <path d="M43 2 L56 15 L43 28 L30 15 Z" />
            <rect x="2" y="36" width="22" height="26" rx="4" />
            <rect x="33" y="36" width="23" height="26" rx="4" />
          </g>
        </svg>
        <span className={label}>功能</span>
      </div>
      <div className="flex w-[225px] flex-col items-center pt-[9px]">
        <svg viewBox="0 0 64 64" className="h-[64px] w-[64px]">
          <circle cx="32" cy="32" r="29" fill="none" stroke="#6a6a6a" strokeWidth="3.5" />
          <circle cx="21" cy="32" r="2.5" fill="#6a6a6a" />
          <circle cx="32" cy="32" r="2.5" fill="#6a6a6a" />
          <circle cx="43" cy="32" r="2.5" fill="#6a6a6a" />
        </svg>
        <span className={label}>设自选</span>
      </div>
    </div>
  );
}

export default function App() {
  return (
    <div className="h-[2664px] w-[1200px] overflow-hidden bg-white font-['Roboto','Noto_Sans_CJK_SC',sans-serif]">
      <StatusBar />
      <Header />
      <Quote />
      <Notice />
      <PeriodTabs />
      <MaRow />
      <Charts />
      <Banner />
      <InfoTabs />
      <Cards />
      <BottomBar />
    </div>
  );
}
